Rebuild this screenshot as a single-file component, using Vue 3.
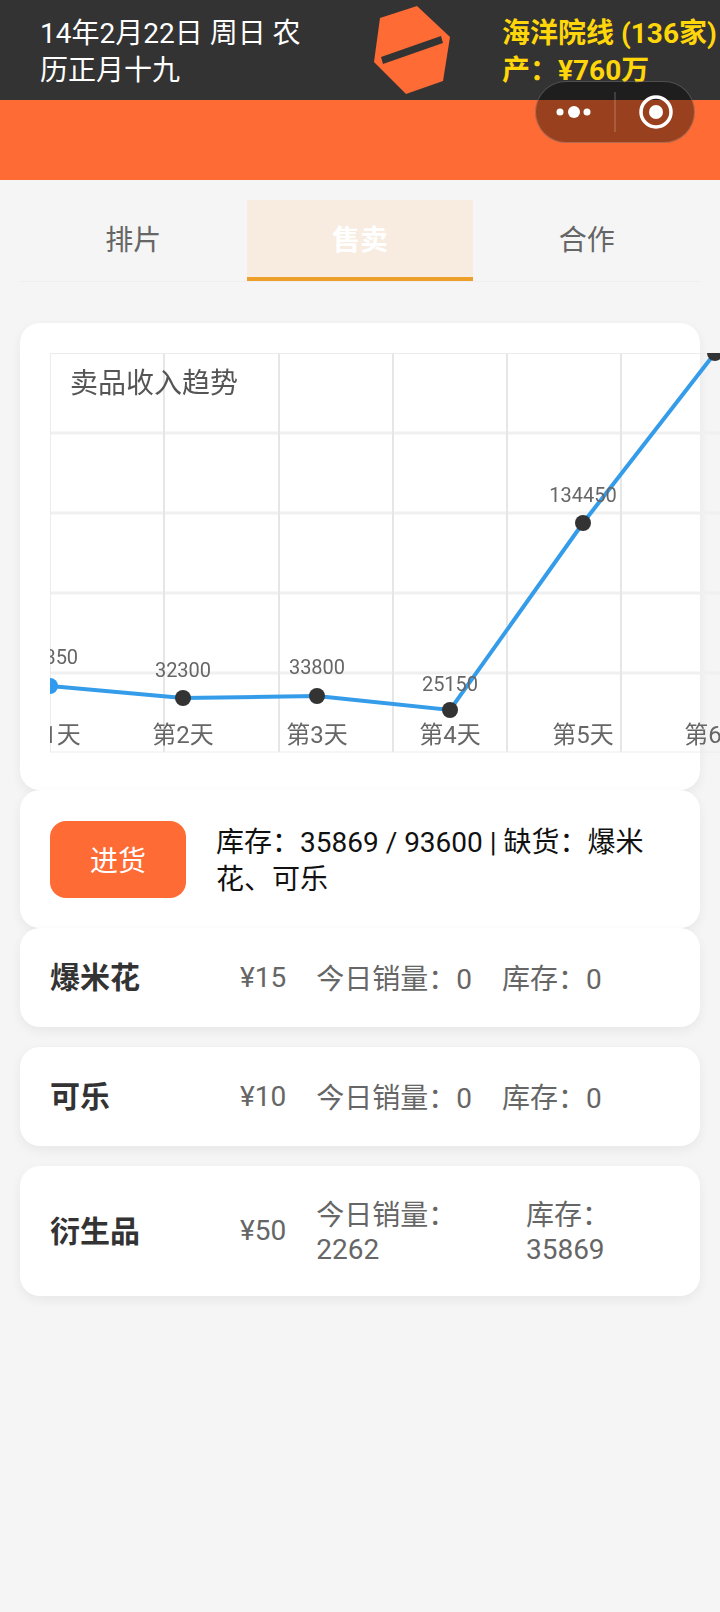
<template>
  <div class="page">
    <header class="top">
      <div class="date">14年2月22日 周日 农历正月十九</div>
      <svg class="logo" width="90" height="100" viewBox="0 0 90 100">
        <polygon points="15,18 52,6 85,37 78,81 41,94 9,62" fill="#ff6b35" />
        <polygon points="16,57 76,36 78,43 18,64" fill="#333" />
      </svg>
      <div class="cinema">
        <div>海洋院线 (136家)</div>
        <div>产：¥760万</div>
      </div>
    </header>
    <div class="band"></div>

    <!-- 小程序胶囊 -->
    <div class="capsule">
      <svg width="160" height="62" viewBox="0 0 160 62">
        <circle cx="25" cy="31" r="3.5" fill="#fff" />
        <circle cx="39" cy="31" r="6" fill="#fff" />
        <circle cx="52" cy="31" r="3.5" fill="#fff" />
        <rect x="79.5" y="11" width="1" height="40" fill="rgba(255,255,255,.3)" />
        <circle cx="121" cy="31" r="15" fill="none" stroke="#fff" stroke-width="3.5" />
        <circle cx="121" cy="31" r="7" fill="#fff" />
      </svg>
    </div>

    <div class="tabs">
      <div v-for="tab in tabs" :key="tab" class="tab" :class="{ active: tab === current }">{{ tab }}</div>
    </div>

    <div class="card chart-card">
      <svg class="chart" width="670" height="400" viewBox="0 0 670 400">
        <line v-for="y in gridY" :key="'h' + y" x1="0" x2="670" :y1="y" :y2="y" class="grid-h" />
        <line v-for="x in gridX" :key="'v' + x" y1="0" y2="399" :x1="x" :x2="x" class="grid-v" />
        <line x1="0" x2="670" y1="0.5" y2="0.5" class="grid-edge" />
        <line x1="0" x2="670" y1="399" y2="399" class="grid-edge" />
        <line x1="0.5" x2="0.5" y1="0" y2="399" class="grid-edge" />
        <text x="20" y="40" class="chart-title">卖品收入趋势</text>
        <polyline :points="linePoints" class="trend" />
        <circle cx="0" cy="333" r="8" fill="#2f9bf0" />
        <circle v-for="p in points.slice(1)" :key="p.day" :cx="p.x" :cy="p.y" r="8" fill="#333" />
        <text v-for="p in points.slice(0, 5)" :key="'v' + p.day" :x="p.x" :y="p.ly" class="value">{{ p.value }}</text>
        <text v-for="p in points" :key="'d' + p.day" :x="p.x" y="390" class="day">第{{ p.day }}天</text>
      </svg>
    </div>

    <div class="card stock">
      <button class="buy">进货</button>
      <div class="stock-text">库存：35869 / 93600 | 缺货：爆米花、可乐</div>
    </div>

    <div v-for="(item, i) in goods" :key="item.name" class="card goods" :class="{ first: i === 0 }">
      <div class="name">{{ item.name }}</div>
      <div class="price">¥{{ item.price }}</div>
      <div class="cell">今日销量：{{ item.sold }}</div>
      <div class="cell">库存：{{ item.stock }}</div>
    </div>
  </div>
</template>

<script setup>
import { computed, ref } from 'vue'

const tabs = ['排片', '售卖', '合作']
const current = ref('售卖')

const gridY = [80, 160, 240, 320]
const gridX = [114, 229, 343, 457, 571]

// 坐标相对图表左上角
const points = [
  { day: 1, value: 37350, x: 0, y: 333, ly: 311 },
  { day: 2, value: 32300, x: 133, y: 345, ly: 324 },
  { day: 3, value: 33800, x: 267, y: 343, ly: 321 },
  { day: 4, value: 25150, x: 400, y: 357, ly: 338 },
  { day: 5, value: 134450, x: 533, y: 170, ly: 149 },
  { day: 6, value: 0, x: 665, y: 0, ly: 0 }
]

const linePoints = computed(() => points.map(p => `${p.x},${p.y}`).join(' '))

const goods = [
  { name: '爆米花', price: 15, sold: 0, stock: 0 },
  { name: '可乐', price: 10, sold: 0, stock: 0 },
  { name: '衍生品', price: 50, sold: 2262, stock: 35869 }
]
</script>

<style>
html, body {
  background: #f5f5f5;
}
</style>

<style scoped>
.page {
  position: relative;
  width: 720px;
  min-height: 1612px;
  background: #f5f5f5;
  overflow: hidden;
  font-family: Roboto, "Noto Sans CJK SC", sans-serif;
  font-size: 28px;
}

.top {
  display: flex;
  align-items: center;
  height: 100px;
  padding-left: 40px;
  background: #333;
  box-sizing: border-box;
  line-height: 37px;
}

.date {
  width: 270px;
  flex: none;
  margin-top: 3px;
  color: #fff;
}

.logo {
  flex: none;
  margin-left: 55px;
  align-self: flex-start;
}

.cinema {
  flex: none;
  margin: 3px 0 0 47px;
  color: #ffd60a;
  font-weight: 700;
  white-space: nowrap;
}

.band {
  height: 80px;
  background: #ff6b35;
}

.capsule {
  position: absolute;
  top: 81px;
  left: 535px;
  width: 160px;
  height: 62px;
  border-radius: 31px;
  background: rgba(0, 0, 0, 0.4);
  box-shadow: inset 0 0 0 1px rgba(255, 255, 255, 0.22);
}

.capsule svg {
  display: block;
}

.tabs {
  display: flex;
  margin: 20px 20px 0;
  border-bottom: 1px solid #eee;
}

.tab {
  flex: 1;
  height: 81px;
  line-height: 82px;
  text-align: center;
  color: #666;
  box-sizing: border-box;
}

.tab.active {
  background: #f7ecdf;
  border-bottom: 4px solid #ee9f2a;
  color: #fff;
  font-weight: 700;
}

.card {
  margin: 0 20px;
  background: #fff;
  border-radius: 20px;
  box-shadow: 0 4px 12px rgba(0, 0, 0, 0.06);
}

.chart-card {
  margin-top: 41px;
  height: 467px;
  padding: 30px 0 0 30px;
  box-sizing: border-box;
}

.chart {
  display: block;
  filter: blur(0.4px);
}

.grid-h {
  stroke: #f0f0f0;
  stroke-width: 3;
}

.grid-v {
  stroke: #e6e6e6;
  stroke-width: 2;
}

.grid-edge {
  stroke: #ececec;
  stroke-width: 1;
}

.chart-title {
  font-size: 28px;
  fill: #555;
}

.trend {
  fill: none;
  stroke: #359cea;
  stroke-width: 4;
}

.value {
  font-size: 20px;
  fill: #666;
  text-anchor: middle;
}

.day {
  font-size: 24px;
  fill: #666;
  text-anchor: middle;
}

.stock {
  display: flex;
  align-items: center;
  gap: 30px;
  padding: 30px;
  height: 138px;
  box-sizing: border-box;
}

.buy {
  flex: none;
  width: 136px;
  height: 77px;
  border: none;
  border-radius: 16px;
  background: #ff6b35;
  color: #fff;
  font: inherit;
}

.stock-text {
  margin-top: 4px;
  color: #111;
  line-height: 37px;
}

.goods {
  display: flex;
  align-items: center;
  gap: 30px;
  padding: 31px 30px;
  margin-top: 20px;
  line-height: 34px;
  color: #666;
}

.goods.first {
  margin-top: 0;
}

.name {
  flex: none;
  width: 160px;
  color: #333;
  font-size: 30px;
  line-height: 37px;
  font-weight: 700;
}

.price {
  flex: none;
}

.cell {
  min-width: 0;
  transform: translateY(2px);
}
</style>
